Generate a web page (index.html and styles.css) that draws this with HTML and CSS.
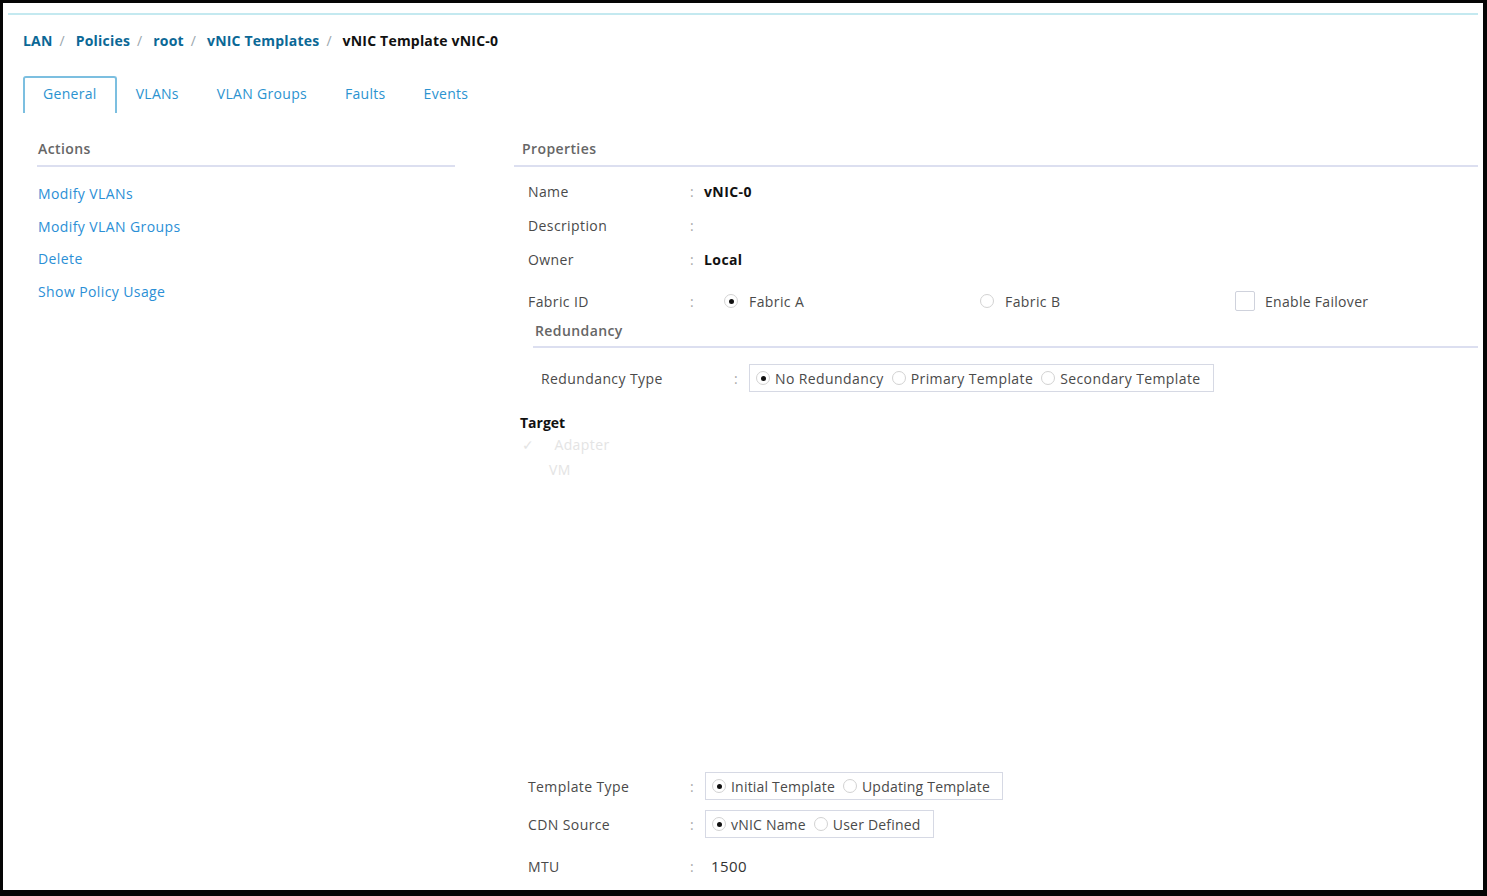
FILE: index.html
```html
<!DOCTYPE html>
<html lang="en">
  <head>
    <meta charset="UTF-8" />
    <meta name="viewport" content="width=device-width, initial-scale=1.0" />
    <title>vNIC Template vNIC-0</title>
    <link rel="stylesheet" href="styles.css">
  </head>
  <body>
    <div class="frame">
      <div class="topline"></div>
      <div class="breadcrumb">
        <a href="#">LAN</a><span class="sep">/</span>
        <a href="#">Policies</a><span class="sep">/</span>
        <a href="#">root</a><span class="sep">/</span>
        <a href="#">vNIC Templates</a><span class="sep">/</span>
        <span class="current">vNIC Template vNIC-0</span>
      </div>
      <div class="tabs">
        <div class="tab active">General</div>
        <div class="tab">VLANs</div>
        <div class="tab">VLAN Groups</div>
        <div class="tab">Faults</div>
        <div class="tab">Events</div>
      </div>
      <div class="main">
        <div class="actions">
          <h4 class="section-title">Actions</h4>
          <ul class="action-list">
            <li><a href="#">Modify VLANs</a></li>
            <li><a href="#">Modify VLAN Groups</a></li>
            <li><a href="#">Delete</a></li>
            <li><a href="#">Show Policy Usage</a></li>
          </ul>
        </div>
        <div class="props">
          <h4 class="section-title">Properties</h4>
          <div class="prop-row">
            <span class="label">Name</span><span class="colon">:</span>
            <span class="value bold">vNIC-0</span>
          </div>
          <div class="prop-row">
            <span class="label">Description</span><span class="colon">:</span>
            <span class="value"></span>
          </div>
          <div class="prop-row">
            <span class="label">Owner</span><span class="colon">:</span>
            <span class="value bold">Local</span>
          </div>
          <div class="prop-row fabric">
            <span class="label">Fabric ID</span><span class="colon">:</span>
            <div class="fabric-options">
              <label class="opt"><span class="radio on"></span>Fabric A</label>
              <label class="opt"><span class="radio"></span>Fabric B</label>
              <label class="opt"><span class="checkbox"></span>Enable Failover</label>
            </div>
          </div>
          <div class="redundancy">
            <h4 class="section-title">Redundancy</h4>
            <div class="red-row">
              <span class="label">Redundancy Type</span><span class="colon">:</span>
              <div class="radio-group">
                <label class="opt"><span class="radio on"></span>No Redundancy</label>
                <label class="opt"><span class="radio"></span>Primary Template</label>
                <label class="opt"><span class="radio"></span>Secondary Template</label>
              </div>
            </div>
          </div>
          <div class="target">
            <div class="target-title">Target</div>
            <div class="faint"><span class="check">&#10003;</span>Adapter</div>
            <div class="faint vm">VM</div>
          </div>
          <div class="bottom">
            <div class="prop-row boxed">
              <span class="label">Template Type</span><span class="colon">:</span>
              <div class="radio-group">
                <label class="opt"><span class="radio on"></span>Initial Template</label>
                <label class="opt"><span class="radio"></span>Updating Template</label>
              </div>
            </div>
            <div class="prop-row boxed">
              <span class="label">CDN Source</span><span class="colon">:</span>
              <div class="radio-group">
                <label class="opt"><span class="radio on"></span>vNIC Name</label>
                <label class="opt"><span class="radio"></span>User Defined</label>
              </div>
            </div>
            <div class="prop-row mtu">
              <span class="label">MTU</span><span class="colon">:</span>
              <span class="value">1500</span>
            </div>
          </div>
        </div>
      </div>
    </div>
  </body>
</html>
```

FILE: styles.css
```css
html,
body {
  margin: 0;
  background-color: #050505;
}
body {
  font-family: "Open Sans", "Liberation Sans", sans-serif;
  font-size: 14px;
  letter-spacing: 0.4px;
  color: #4a4a4a;
}
.frame {
  background-color: #fff;
  margin: 3px 4px 6px 3px;
  height: 887px;
  padding-top: 10px;
  box-sizing: border-box;
}
.topline {
  height: 2px;
  margin: 0 5px;
  background-color: #c4e9f0;
}
.breadcrumb {
  margin: 18px 0 0 20px;
  line-height: 16px;
  font-weight: bold;
  font-size: 14px;
  letter-spacing: 0.2px;
}
.breadcrumb a {
  color: #0b6896;
  text-decoration: none;
}
.breadcrumb .sep {
  color: #9aa6ad;
  font-weight: normal;
  margin: 0 7px;
}
.breadcrumb .current {
  color: #111;
}
.tabs {
  display: flex;
  margin: 27px 0 0 20px;
  height: 37px;
}
.tab {
  padding: 0 17px;
  line-height: 31px;
  color: #2b93d0;
  letter-spacing: 0.3px;
  border: 2px solid transparent;
  border-bottom: none;
}
.tab.active {
  padding: 0 18px;
  border-color: #7cbfe0;
  border-radius: 3px 3px 0 0;
}
.main {
  display: flex;
  padding: 0 5px 0 34px;
  margin-top: 28px;
}
.section-title {
  margin: 0;
  font-size: 14px;
  font-weight: 600;
  line-height: 16px;
  color: #666;
  padding-bottom: 8px;
  border-bottom: 2px solid #dcdff0;
}
.actions {
  width: 418px;
}
.actions .section-title {
  padding-left: 1px;
}
.action-list {
  list-style: none;
  margin: 19px 0 0;
  padding: 0 0 0 1px;
  display: flex;
  flex-direction: column;
  gap: 16.5px;
}
.action-list li {
  line-height: 16px;
}
.action-list a {
  color: #2b8fd6;
  text-decoration: none;
}
.props {
  flex: 1;
  margin-left: 59px;
}
.props > .section-title {
  padding-left: 8px;
}
.prop-row {
  display: grid;
  grid-template-columns: 162px 14px 1fr;
  align-items: center;
  height: 34px;
  padding-left: 14px;
}
.props > .section-title + .prop-row {
  margin-top: 7px;
}
.colon {
  color: #aaa;
}
.value.bold {
  font-weight: bold;
  color: #111;
}
.prop-row.fabric {
  margin-top: 8px;
}
.fabric-options {
  display: grid;
  grid-template-columns: 256px 255px auto;
  padding-left: 20px;
}
.opt {
  display: flex;
  align-items: center;
  gap: 5px;
  color: #4a4a4a;
  white-space: nowrap;
}
.fabric-options .opt {
  gap: 11px;
}
.fabric-options .opt:nth-child(3) {
  gap: 10px;
  letter-spacing: 0.3px;
}
.radio {
  width: 14px;
  height: 14px;
  border: 1px solid #d2d2d2;
  border-radius: 50%;
  box-sizing: border-box;
  display: inline-flex;
  align-items: center;
  justify-content: center;
  flex-shrink: 0;
}
.radio.on::after {
  content: "";
  width: 5px;
  height: 5px;
  border-radius: 50%;
  background-color: #111;
}
.checkbox {
  width: 20px;
  height: 20px;
  border: 1px solid #cfd2dc;
  border-radius: 2px;
  box-sizing: border-box;
}
.redundancy {
  margin-left: 19px;
  margin-top: 5px;
}
.redundancy .section-title {
  padding-left: 2px;
  padding-bottom: 7px;
}
.red-row {
  display: grid;
  grid-template-columns: 193px 15px auto;
  align-items: center;
  margin-top: 16px;
  padding-left: 8px;
}
.radio-group {
  display: flex;
  align-items: center;
  gap: 8px;
  border: 1px solid #d6d9e4;
  height: 28px;
  padding: 0 12px 0 6px;
  box-sizing: border-box;
  justify-self: start;
}
.target {
  margin-top: 23px;
  padding-left: 6px;
}
.target-title {
  font-weight: bold;
  color: #111;
  font-size: 14px;
  letter-spacing: 0;
  line-height: 16px;
}
.faint {
  color: #e4e4e4;
  line-height: 16px;
  margin-top: 6px;
  padding-left: 2px;
}
.faint .check {
  margin-right: 20px;
}
.faint.vm {
  margin-top: 9px;
  padding-left: 29px;
}
.bottom {
  margin-top: 294px;
}
.prop-row.boxed {
  height: 28px;
  grid-template-columns: 162px 15px 1fr;
}
.prop-row.boxed + .prop-row.boxed {
  margin-top: 10px;
}
.prop-row.boxed .radio-group {
  letter-spacing: 0.2px;
}
.prop-row.mtu {
  margin-top: 14px;
  height: 28px;
}
.prop-row.mtu .value {
  font-size: 15px;
  padding-left: 7px;
  color: #333;
}
```
